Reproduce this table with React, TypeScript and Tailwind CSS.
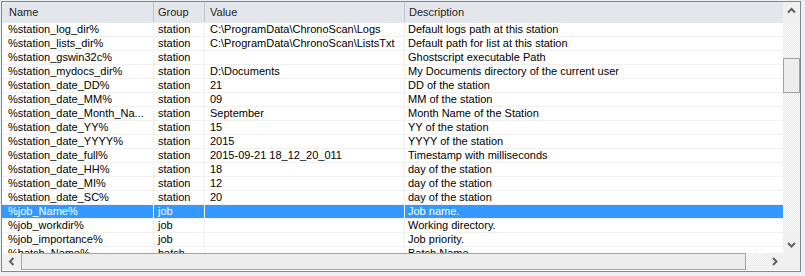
import React from "react";

type Row = [string, string, string, string];

const rows: Row[] = [
  ["%station_log_dir%", "station", "C:\\ProgramData\\ChronoScan\\Logs", "Default logs path at this station"],
  ["%station_lists_dir%", "station", "C:\\ProgramData\\ChronoScan\\ListsTxt", "Default path for list at this station"],
  ["%station_gswin32c%", "station", "", "Ghostscript executable Path"],
  ["%station_mydocs_dir%", "station", "D:\\Documents", "My Documents directory of the current user"],
  ["%station_date_DD%", "station", "21", "DD of the station"],
  ["%station_date_MM%", "station", "09", "MM of the station"],
  ["%station_date_Month_Na...", "station", "September", "Month Name of the Station"],
  ["%station_date_YY%", "station", "15", "YY of the station"],
  ["%station_date_YYYY%", "station", "2015", "YYYY of the station"],
  ["%station_date_full%", "station", "2015-09-21 18_12_20_011", "Timestamp with milliseconds"],
  ["%station_date_HH%", "station", "18", "day of the station"],
  ["%station_date_MI%", "station", "12", "day of the station"],
  ["%station_date_SC%", "station", "20", "day of the station"],
  ["%job_Name%", "job", "", "Job name."],
  ["%job_workdir%", "job", "", "Working directory."],
  ["%job_importance%", "job", "", "Job priority."],
  ["%batch_Name%", "batch", "", "Batch Name."],
];

const checker =
  "bg-[repeating-conic-gradient(#e9e9e9_0%_25%,#fbfbfb_0%_50%)] bg-[length:2px_2px]";

function Chevron({ dir }: { dir: "up" | "down" | "left" | "right" }) {
  const pts: Record<string, string> = {
    up: "1,5.5 4.5,2 8,5.5",
    down: "1,2 4.5,5.5 8,2",
    left: "5.5,1 2,4.5 5.5,8",
    right: "2,1 5.5,4.5 2,8",
  };
  const vertical = dir === "up" || dir === "down";
  return (
    <svg
      width={vertical ? 9 : 8}
      height={vertical ? 8 : 9}
      viewBox={vertical ? "0 0 9 8" : "0 0 8 9"}
    >
      <polyline points={pts[dir]} fill="none" stroke="#606060" strokeWidth="2" />
    </svg>
  );
}

export default function App() {
  return (
    <div
      className="w-[805px] h-[276px] bg-[#eceff3] pt-px pl-px overflow-hidden"
      style={{ fontFamily: '"Liberation Sans", Arial, sans-serif' }}
    >
      <div className="w-[800px] h-[271px] border border-[#828790] bg-white grid grid-cols-[781px_17px] grid-rows-[251px_17px]">
        {/* list area */}
        <div className="overflow-hidden text-[11px] leading-[13px]">
          {/* header */}
          <div className="flex h-[21px] bg-[#e3e6eb] border-b border-[#e3e6eb] text-[#1e1e1e]">
            <div className="w-[152px] shrink-0 border-r border-[#c2c6cc] pl-[7px] pt-[4px]">Name</div>
            <div className="w-[51px] shrink-0 border-r border-[#c2c6cc] pl-[4px] pt-[4px]">Group</div>
            <div className="w-[200px] shrink-0 border-r border-[#c2c6cc] pl-[5px] pt-[4px]">Value</div>
            <div className="flex-1 pl-[4px] pt-[4px]">Description</div>
          </div>
          {rows.map((r, i) => {
            const sel = i === 13;
            const line = sel ? "border-white" : "border-[#f0f0f0]";
            return (
              <div
                key={i}
                className={`flex h-[14px] border-b border-[#f0f0f0] ${
                  sel ? "bg-[#3399ff] text-white" : "bg-white text-black"
                } whitespace-nowrap`}
              >
                <div className={`w-[152px] shrink-0 border-r ${line} pl-[6px] overflow-hidden`}>{r[0]}</div>
                <div className={`w-[51px] shrink-0 border-r ${line} pl-[4px] overflow-hidden`}>{r[1]}</div>
                <div className={`w-[200px] shrink-0 border-r ${line} pl-[5px] overflow-hidden`}>{r[2]}</div>
                <div className="flex-1 pl-[3px] overflow-hidden">{r[3]}</div>
              </div>
            );
          })}
        </div>

        {/* vertical scrollbar */}
        <div className="flex flex-col bg-[#f0f0f0]">
          <div className="h-[17px] flex items-center justify-center shrink-0">
            <Chevron dir="up" />
          </div>
          <div className={`h-[39px] shrink-0 ${checker}`} />
          <div className="h-[35px] shrink-0 border border-[#a3a3a3] bg-[#ededed]" />
          <div className={`flex-1 ${checker}`} />
          <div className="h-[17px] flex items-center justify-center shrink-0">
            <Chevron dir="down" />
          </div>
        </div>

        {/* horizontal scrollbar */}
        <div className="flex bg-[#f0f0f0]">
          <div className="w-[19px] flex items-center justify-center shrink-0">
            <Chevron dir="left" />
          </div>
          <div className="w-[725px] shrink-0 border border-[#a3a3a3] bg-[#ededed]" />
          <div className={`flex-1 ${checker}`} />
          <div className="w-[17px] flex items-center justify-center shrink-0">
            <Chevron dir="right" />
          </div>
        </div>

        {/* corner */}
        <div className="bg-[#f0f0f0]" />
      </div>
    </div>
  );
}
